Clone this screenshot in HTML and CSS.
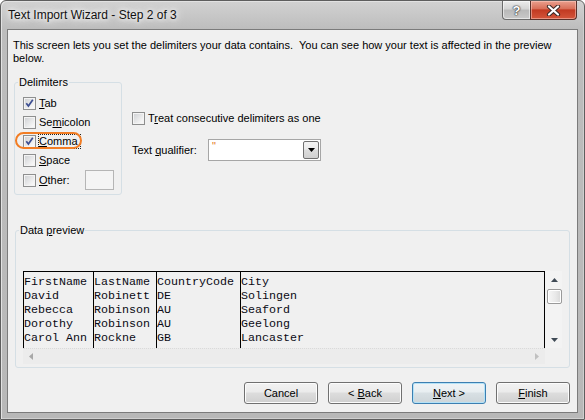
FILE: index.html
```html
<!DOCTYPE html>
<html>
<head>
<meta charset="utf-8">
<title>Text Import Wizard</title>
<link rel="stylesheet" href="styles.css">
</head>
<body>
<div class="window">
  <div class="titlebar">
    <span class="title">Text Import Wizard - Step 2 of 3</span>
    <div class="caption">
      <span class="cap-btn help">?</span>
      <span class="cap-btn close"><svg width="15" height="11" viewBox="0 0 15 11"><path d="M3 1.5 L12 9.5 M12 1.5 L3 9.5" stroke="#3b2a27" stroke-width="4.2" stroke-linecap="round"/><path d="M3 1.5 L12 9.5 M12 1.5 L3 9.5" stroke="#fff" stroke-width="2.2" stroke-linecap="round"/></svg></span>
    </div>
  </div>
  <div class="client">
    <p class="intro">This screen lets you set the delimiters your data contains.&nbsp; You can see how your text is affected in the preview<br>below.</p>
    <div class="options">
      <fieldset class="group delims">
        <legend>Delimiters</legend>
        <div class="delims-body">
          <div class="check-row"><span class="cb"><svg width="11" height="11" viewBox="0 0 11 11"><path d="M2.3 5.2 L4.4 8 L8.8 1.8" fill="none" stroke="#3d4f92" stroke-width="1.7"/></svg></span><span class="lbl"><u>T</u>ab</span></div>
          <div class="check-row"><span class="cb"></span><span class="lbl">Se<u>m</u>icolon</span></div>
          <div class="check-row"><span class="cb"><svg width="11" height="11" viewBox="0 0 11 11"><path d="M2.3 5.2 L4.4 8 L8.8 1.8" fill="none" stroke="#3d4f92" stroke-width="1.7"/></svg></span><span class="lbl focus"><u>C</u>omma</span><span class="annot"></span></div>
          <div class="check-row"><span class="cb"></span><span class="lbl"><u>S</u>pace</span></div>
          <div class="check-row other"><span class="cb"></span><span class="lbl"><u>O</u>ther:</span><span class="textbox"></span></div>
        </div>
      </fieldset>
      <div class="side">
        <div class="check-row"><span class="cb"></span><span class="lbl">T<u>r</u>eat consecutive delimiters as one</span></div>
        <div class="qual-row">
          <span class="qual-label">Text <u>q</u>ualifier:</span>
          <div class="combo">
            <span class="combo-val">"</span>
            <span class="combo-btn"><svg width="7" height="4" viewBox="0 0 7 4"><path d="M0 0 H7 L3.5 4 Z" fill="#000"/></svg></span>
          </div>
        </div>
      </div>
    </div>
    <fieldset class="group preview">
      <legend>Data <u>p</u>review</legend>
      <div class="pv-body">
        <div class="pv-main">
          <div class="grid">
            <div class="col c1">FirstName
David
Rebecca
Dorothy
Carol Ann</div>
            <div class="col c2">LastName
Robinett
Robinson
Robinson
Rockne</div>
            <div class="col c3">CountryCode
DE
AU
AU
GB</div>
            <div class="col c4">City
Solingen
Seaford
Geelong
Lancaster</div>
          </div>
          <div class="vscroll">
            <span class="arrow-btn"><svg width="7" height="4" viewBox="0 0 7 4"><path d="M0 4 H7 L3.5 0 Z" fill="#3f4a55"/></svg></span>
            <span class="thumb"></span>
            <span class="arrow-btn down"><svg width="7" height="4" viewBox="0 0 7 4"><path d="M0 0 H7 L3.5 4 Z" fill="#3f4a55"/></svg></span>
          </div>
        </div>
        <div class="pv-bottom">
          <div class="hscroll">
            <svg width="4" height="7" viewBox="0 0 4 7"><path d="M4 0 V7 L0 3.5 Z" fill="#a8a8a8"/></svg>
            <svg width="4" height="7" viewBox="0 0 4 7"><path d="M0 0 V7 L4 3.5 Z" fill="#c0c0c0"/></svg>
          </div>
          <div class="corner"></div>
        </div>
      </div>
    </fieldset>
    <div class="buttons">
      <span class="btn"><span>Cancel</span></span>
      <span class="btn"><span>&lt; <u>B</u>ack</span></span>
      <span class="btn default"><span><u>N</u>ext &gt;</span></span>
      <span class="btn"><span><u>F</u>inish</span></span>
    </div>
  </div>
</div>
</body>
</html>
```
FILE: styles.css
```css
* { box-sizing: border-box; }
html, body { margin: 0; padding: 0; background: #ffffff; }
body {
  font-family: "Liberation Sans", Arial, sans-serif;
  font-size: 11px;
  color: #000;
}

.window {
  width: 585px;
  height: 420px;
  display: flex;
  flex-direction: column;
  border: 1px solid #5e5e5e;
  border-radius: 6px 6px 0 0;
  padding: 0 6px 6px;
  background: linear-gradient(#d2d2d2, #bdbdbd 28px, #b8b8b8);
  box-shadow: inset 1px 1px 0 #e2e2e2, inset -1px -1px 0 #cfcfcf;
}

.titlebar {
  height: 28px;
  flex: none;
  display: flex;
  justify-content: space-between;
  align-items: flex-start;
}
.title {
  margin: 7px 0 0 1px;
  font-size: 12px;
  line-height: 15px;
  color: #111;
  text-shadow: 0 0 4px #fff, 0 0 8px #fff, 0 0 12px rgba(255,255,255,0.9);
}
.caption { display: flex; margin-right: 1px; }
.cap-btn {
  height: 19px;
  display: flex;
  align-items: center;
  justify-content: center;
}
.help {
  width: 28px;
  border: 1px solid #6c6c6c;
  border-right: none;
  border-top: none;
  border-radius: 0 0 0 4px;
  background: linear-gradient(#ececec, #d4d4d4 45%, #b9b9b9 50%, #c9c9c9);
  box-shadow: inset 0 0 0 1px rgba(255,255,255,0.55);
  color: #fff;
  font-weight: bold;
  font-size: 13px;
  text-shadow: 0 0 1px #333, 0 0 1px #333, 0 0 2px #444;
}
.close {
  width: 47px;
  border: 1px solid #5a312a;
  border-top: none;
  border-radius: 0 0 4px 0;
  background: linear-gradient(#eaa08e, #d9705a 42%, #c23a22 50%, #d4563b);
  box-shadow: inset 0 0 0 1px rgba(255,210,200,0.5);
}

.client {
  flex: 1;
  display: flex;
  flex-direction: column;
  border: 1px solid #7b7b7b;
  background: #f0f0f0;
}

.intro {
  margin: 0;
  padding: 9px 0 0 5px;
  line-height: 13px;
}

.options {
  display: flex;
  align-items: flex-start;
  margin-top: 9px;
}

fieldset.group {
  padding: 0;
  min-width: 0;
  border: 1px solid #d5dfe5;
  border-radius: 3px;
}
fieldset.group legend {
  padding: 0 1px;
  margin-left: 3px;
  line-height: 16px;
}

fieldset.delims { margin: 0 0 0 6px; width: 108px; }
.delims-body { padding: 4px 7px 4px 8px; }

.check-row {
  position: relative;
  display: flex;
  align-items: center;
  height: 19px;
}
.check-row.other { height: 20px; }
.cb {
  flex: none;
  width: 13px;
  height: 13px;
  margin-right: 3px;
  border: 1px solid #8e8f8f;
  background: linear-gradient(135deg, #cdcfd2, #f6f6f6 80%);
  box-shadow: inset 0 0 0 1px #f4f4f4;
}
.cb svg { display: block; }
.lbl { line-height: 13px; white-space: nowrap; }
.lbl.focus { outline: 1px dotted #222; padding-right: 2px; }
.annot {
  position: absolute;
  left: -8px;
  top: 0;
  width: 67px;
  height: 17px;
  border: 2px solid #f27d24;
  border-radius: 9px;
}
.textbox {
  margin-left: auto;
  width: 29px;
  height: 20px;
  border: 1px solid #b5b5b5;
  background: #f4f4f4;
}

.side { margin-left: 10px; padding-top: 35px; }
.qual-row {
  display: flex;
  align-items: center;
  margin-top: 11px;
  height: 22px;
}
.qual-label { width: 76px; }
.combo {
  width: 113px;
  height: 22px;
  display: flex;
  justify-content: space-between;
  padding: 1px;
  border: 1px solid #a6a6a6;
  background: #fff;
}
.combo-val {
  color: #e4761c;
  padding-left: 2px;
  line-height: 11px;
  font-size: 11px;
}
.combo-btn {
  width: 16px;
  height: 18px;
  display: flex;
  align-items: center;
  justify-content: center;
  border: 1px solid #707070;
  border-radius: 2px;
  background: linear-gradient(#f3f3f3, #ebebeb 45%, #dcdcdc 50%, #d0d0d0);
}

fieldset.preview { margin: 27px 7px 0 7px; }
.pv-body { padding: 33px 7px 3px; }
.pv-main { display: flex; height: 77px; }
.grid {
  flex: 1;
  display: flex;
  border: 1px solid #000;
  border-bottom: none;
  font-family: "Liberation Mono", "Courier New", monospace;
  font-size: 11.67px;
  line-height: 14px;
  color: #0a0a14;
  overflow: hidden;
}
.col { white-space: pre; padding-top: 3px; overflow: hidden; }
.c1 { width: 69px; }
.c2 { width: 63px; border-left: 1px solid #000; }
.c3 { width: 84px; border-left: 1px solid #000; }
.c4 { flex: 1; border-left: 1px solid #000; }

.vscroll {
  width: 17px;
  display: flex;
  flex-direction: column;
  background: #f3f3f3;
}
.arrow-btn {
  height: 17px;
  display: flex;
  align-items: center;
  justify-content: center;
  padding-left: 1px;
}
.arrow-btn.down { margin-top: auto; }
.thumb {
  margin: 1px 0 0 2px;
  width: 15px;
  height: 15px;
  border: 1px solid #9a9a9a;
  border-radius: 2px;
  background: linear-gradient(90deg, #f7f7f7, #e8e8e8 60%, #d8d8d8);
  box-shadow: inset 0 0 0 1px #fff;
}

.pv-bottom { display: flex; height: 16px; }
.hscroll {
  flex: 1;
  display: flex;
  align-items: center;
  justify-content: space-between;
  padding: 0 6px 0 6px;
  border-top: 1px dotted #dadada;
  background: #ececec;
}
.corner { width: 17px; background: #f0f0f0; }

.buttons {
  display: flex;
  justify-content: flex-end;
  gap: 10px;
  margin: auto 7px 8px 0;
}
.btn {
  width: 74px;
  height: 22px;
  display: flex;
  align-items: center;
  justify-content: center;
  border: 1px solid #707070;
  border-radius: 3px;
  background: linear-gradient(#f2f2f2, #ebebeb 45%, #dddddd 50%, #cfcfcf);
  box-shadow: inset 0 0 0 1px #fcfcfc;
}
.btn.default {
  border-color: #3c7fb1;
  box-shadow: inset 0 0 0 1px #b4e2f7;
  background: linear-gradient(#f0f4f6, #e8eef1 45%, #d8e0e4 50%, #cdd5d9);
}
```
